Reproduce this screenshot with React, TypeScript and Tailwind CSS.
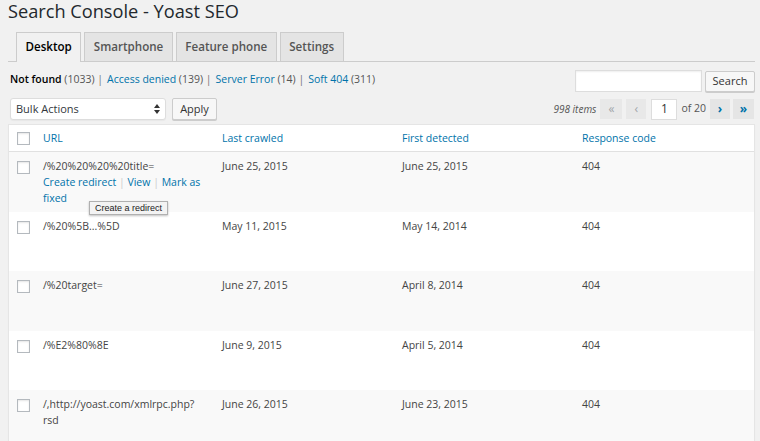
import { ReactNode } from "react";

type Row = {
  url: ReactNode;
  crawled: string;
  detected: string;
  code: string;
  actions?: boolean;
};

const rows: Row[] = [
  { url: "/%20%20%20%20title=", crawled: "June 25, 2015", detected: "June 25, 2015", code: "404", actions: true },
  { url: "/%20%5B...%5D", crawled: "May 11, 2015", detected: "May 14, 2014", code: "404" },
  { url: "/%20target=", crawled: "June 27, 2015", detected: "April 8, 2014", code: "404" },
  { url: "/%E2%80%8E", crawled: "June 9, 2015", detected: "April 5, 2014", code: "404" },
  {
    url: (
      <>
        /,http://yoast.com/xmlrpc.php?<wbr />rsd
      </>
    ),
    crawled: "June 26, 2015",
    detected: "June 23, 2015",
    code: "404",
  },
];

function Checkbox() {
  return <span className="block w-[13px] h-[13px] bg-white border border-[#b4b9be] shadow-[inset_0_1px_2px_rgba(0,0,0,0.1)]" />;
}

function Tab({ label, active }: { label: string; active?: boolean }) {
  return (
    <div
      className={
        active
          ? "relative -mb-px h-[30px] px-[8.5px] flex items-center border border-b-0 border-[#ccc] bg-[#f1f1f1] text-[11.6px] font-semibold text-[#000] pb-px"
          : "h-[29px] px-[8.5px] flex items-center border border-b-0 border-[#ccc] bg-[#e4e4e4] text-[11.6px] font-semibold text-[#555]"
      }
    >
      {label}
    </div>
  );
}

function PageBtn({ glyph, enabled, w }: { glyph: string; enabled?: boolean; w: string }) {
  return (
    <span
      className={
        (enabled
          ? "h-[20px] flex items-center justify-center bg-[#e5e5e5] text-[#0073aa] text-[12px] font-bold leading-none "
          : "h-[20px] flex items-center justify-center bg-[#e8e8e8] text-[#a0a5aa] text-[12px] leading-none ") + w
      }
    >
      {glyph}
    </span>
  );
}

export default function App() {
  return (
    <div className="min-h-screen bg-[#f1f1f1] font-['Open_Sans',sans-serif] text-[#555] overflow-hidden">
      <div className="pl-[8px] w-[755px]">
        <h1 className="text-[18.2px] leading-[22px] text-[#23282d] font-normal">Search Console - Yoast SEO</h1>

        {/* tabs */}
        <div className="mt-[10px] h-[30px] flex items-end gap-[3px] pl-[8px] border-b border-[#ccc]">
          <Tab label="Desktop" active />
          <Tab label="Smartphone" />
          <Tab label="Feature phone" />
          <Tab label="Settings" />
        </div>

        {/* filters + search */}
        <div className="mt-[8px] flex items-start justify-between">
          <div className="pl-[2px] pt-[1px] text-[10.5px] leading-[16px] flex gap-[4px]">
            <span>
              <span className="font-semibold text-black">Not found</span> (1033) <span className="text-[#777]">|</span>
            </span>
            <span>
              <span className="text-[#0073aa]">Access denied</span> (139) <span className="text-[#777]">|</span>
            </span>
            <span>
              <span className="text-[#0073aa]">Server Error</span> (14) <span className="text-[#777]">|</span>
            </span>
            <span>
              <span className="text-[#0073aa]">Soft 404</span> (311)
            </span>
          </div>
          <div className="flex items-center gap-[3px]">
            <span className="w-[127px] h-[22px] bg-white border border-[#ddd] shadow-[inset_0_1px_2px_rgba(0,0,0,0.07)]" />
            <span className="w-[50px] h-[21px] flex items-center justify-center bg-[#f7f7f7] border border-[#ccc] rounded-[2px] shadow-[0_1px_0_#ccc] text-[11px] text-[#333]">
              Search
            </span>
          </div>
        </div>

        {/* bulk actions + pagination */}
        <div className="mt-[6px] flex items-center justify-between pl-[2px]">
          <div className="flex items-center gap-[6px]">
            <div className="w-[156px] h-[22px] bg-white border border-[#ddd] rounded-[3px] flex items-center justify-between pl-[5px] pr-[5px] text-[11px] text-[#32373c] shadow-[0_1px_1px_rgba(0,0,0,0.04)]">
              <span>Bulk Actions</span>
              <svg width="6" height="10" viewBox="0 0 6 10" className="text-[#333]">
                <path d="M3 0 L6 4 L0 4 Z M0 6 L6 6 L3 10 Z" fill="currentColor" />
              </svg>
            </div>
            <span className="w-[45px] h-[22px] flex items-center justify-center bg-[#f7f7f7] border border-[#ccc] rounded-[2px] shadow-[0_1px_0_#ccc] text-[11px] text-[#333]">
              Apply
            </span>
          </div>
          <div className="flex items-center pr-[1px]">
            <span className="italic text-[10px] text-[#555] mr-[4px]">998 items</span>
            <PageBtn glyph="«" w="w-[22px]" />
            <span className="w-[4px]" />
            <PageBtn glyph="‹" w="w-[20px]" />
            <span className="ml-[5px] w-[26px] h-[21px] bg-white border border-[#ddd] flex items-center justify-center text-[12px] text-[#333]">
              1
            </span>
            <span className="ml-[4px] mr-[4px] text-[10.5px] text-[#555]">of 20</span>
            <PageBtn glyph="›" enabled w="w-[20px]" />
            <span className="w-[3px]" />
            <PageBtn glyph="»" enabled w="w-[21px]" />
          </div>
        </div>

        {/* table */}
        <div className="mt-[4px] bg-white border border-[#e5e5e5] border-b-0 shadow-[0_1px_1px_rgba(0,0,0,0.04)] text-[10.5px] leading-[16px]">
          <div className="grid grid-cols-[26px_179px_180px_180px_1fr] h-[27px] items-center border-b border-[#e1e1e1] text-[#0073aa]">
            <div className="pl-[8px]">
              <Checkbox />
            </div>
            <div className="pl-[8px]">URL</div>
            <div className="pl-[8px]">Last crawled</div>
            <div className="pl-[8px]">First detected</div>
            <div className="pl-[8px]">Response code</div>
          </div>
          {rows.map((r, i) => (
            <div
              key={i}
              className={
                "relative grid grid-cols-[26px_179px_180px_180px_1fr] h-[59.5px] items-start " +
                (i % 2 === 0 ? "bg-[#f9f9f9]" : "bg-white")
              }
            >
              <div className="pl-[8px] pt-[9px]">
                <Checkbox />
              </div>
              <div className="pl-[8px] pr-[8px] pt-[6px] break-words text-[#444]">
                <div>{r.url}</div>
                {r.actions && (
                  <div className="text-[#0073aa]">
                    Create redirect <span className="text-[#ccc]">|</span> View <span className="text-[#ccc]">|</span> Mark as fixed
                  </div>
                )}
              </div>
              <div className="pl-[8px] pt-[6px] text-[#444]">{r.crawled}</div>
              <div className="pl-[8px] pt-[6px] text-[#444]">{r.detected}</div>
              <div className="pl-[8px] pt-[6px] text-[#444]">{r.code}</div>
              {r.actions && (
                <div className="absolute z-10 left-[80px] top-[49px] h-[14px] px-[5px] flex items-center bg-[#f3f3f3] border border-[#b0b0b0] shadow-[0_1px_2px_rgba(0,0,0,0.25)] font-['Liberation_Sans',sans-serif] text-[9px] text-[#222] whitespace-nowrap">
                  Create a redirect
                </div>
              )}
            </div>
          ))}
        </div>
      </div>
    </div>
  );
}
